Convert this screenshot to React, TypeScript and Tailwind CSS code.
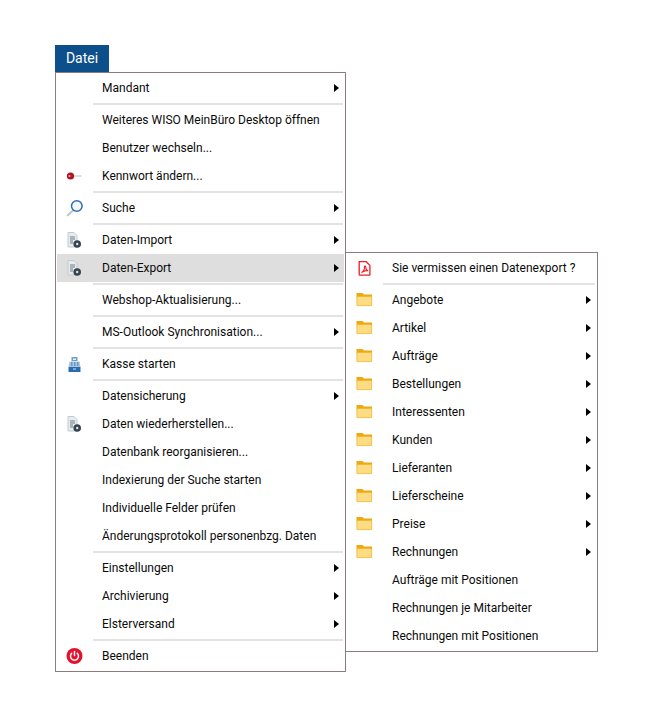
const fontStack = "font-['Roboto',sans-serif]";

type Row = { kind: "item"; label: string; arrow?: boolean; icon?: string; active?: boolean } | { kind: "sep" };

const item = (label: string, arrow = false, icon?: string, active = false): Row => ({ kind: "item", label, arrow, icon, active });
const sep: Row = { kind: "sep" };

const mainRows: Row[] = [
  item("Mandant", true),
  sep,
  item("Weiteres WISO MeinBüro Desktop öffnen"),
  item("Benutzer wechseln..."),
  item("Kennwort ändern...", false, "key"),
  sep,
  item("Suche", true, "search"),
  sep,
  item("Daten-Import", true, "doc"),
  item("Daten-Export", true, "doc", true),
  sep,
  item("Webshop-Aktualisierung..."),
  sep,
  item("MS-Outlook Synchronisation...", true),
  sep,
  item("Kasse starten", false, "till"),
  sep,
  item("Datensicherung", true),
  item("Daten wiederherstellen...", false, "doc"),
  item("Datenbank reorganisieren..."),
  item("Indexierung der Suche starten"),
  item("Individuelle Felder prüfen"),
  item("Änderungsprotokoll personenbzg. Daten"),
  sep,
  item("Einstellungen", true),
  item("Archivierung", true),
  item("Elsterversand", true),
  sep,
  item("Beenden", false, "power"),
];

const subRows: Row[] = [
  item("Sie vermissen einen Datenexport ?", false, "pdf"),
  sep,
  item("Angebote", true, "folder"),
  item("Artikel", true, "folder"),
  item("Aufträge", true, "folder"),
  item("Bestellungen", true, "folder"),
  item("Interessenten", true, "folder"),
  item("Kunden", true, "folder"),
  item("Lieferanten", true, "folder"),
  item("Lieferscheine", true, "folder"),
  item("Preise", true, "folder"),
  item("Rechnungen", true, "folder"),
  item("Aufträge mit Positionen"),
  item("Rechnungen je Mitarbeiter"),
  item("Rechnungen mit Positionen"),
];

function MenuIcon({ name }: { name?: string }) {
  if (name === "key")
    return (
      <svg width="18" height="18" viewBox="0 0 18 18">
        <path d="M8 9h7.500" stroke="#d8d4d4" strokeWidth="1.500" />
        <circle cx="4.500" cy="9" r="3.600" fill="#b3121f" />
        <circle cx="3.500" cy="9" r="1" fill="#f3c4c8" />
      </svg>
    );
  if (name === "search")
    return (
      <svg width="18" height="18" viewBox="0 0 18 18">
        <path d="M7 11.500 1.800 16.300" stroke="#b9cbc9" strokeWidth="2.200" strokeLinecap="round" />
        <circle cx="10.800" cy="7" r="5.300" fill="#f4f8fc" stroke="#2f6db0" strokeWidth="1.500" />
      </svg>
    );
  if (name === "doc")
    return (
      <svg width="18" height="18" viewBox="0 0 18 18">
        <path d="M2 1.500h6l3 3v11.500H2z" fill="#e8ebee" stroke="#c3cad0" strokeWidth="1" />
        <path d="M4 6h5M4 8h5M4 10h3M4 12h3" stroke="#6c7a87" strokeWidth="1" />
        <circle cx="11.200" cy="13" r="3.800" fill="#35444f" />
        <circle cx="11.200" cy="13" r="1.200" fill="#dfe4e8" />
      </svg>
    );
  if (name === "till")
    return (
      <svg width="18" height="18" viewBox="0 0 18 18">
        <path d="M5.500 2h6v4h-6z" fill="#6f9fd0" />
        <path d="M7 3.500h3v1.500H7z" fill="#e8f0f8" />
        <path d="M3.500 6.500h10l1 5.500h-12z" fill="#aac6de" />
        <path d="M5 8h1.500M8 8h1.500M11 8h1.500M5 10h1.500M8 10h1.500M11 10h1.500" stroke="#3e6a99" strokeWidth="1" />
        <path d="M2.500 12h12v5h-12z" fill="#2a6cb3" />
        <path d="M7 14h3" stroke="#cfe0f0" strokeWidth="1" />
      </svg>
    );
  if (name === "power")
    return (
      <svg width="18" height="18" viewBox="0 0 18 18">
        <circle cx="8.500" cy="9" r="8" fill="#e3122d" />
        <path d="M5.700 6.300a4 4 0 1 0 5.600 0" fill="none" stroke="#fff" strokeWidth="1.500" strokeLinecap="round" />
        <path d="M8.500 4.500v4" stroke="#fff" strokeWidth="1.500" strokeLinecap="round" />
      </svg>
    );
  if (name === "pdf")
    return (
      <svg width="18" height="18" viewBox="0 0 18 18">
        <path d="M3.200 2.700h7l3.700 3.700v9a.8.800 0 0 1-.8.800H4a.8.800 0 0 1-.8-.8z" fill="#fff" stroke="#ee1c25" strokeWidth="1.300" />
        <path d="M5.500 13.500c1.700-.8 3-3 3-5.500 0-1.200 1.200-1.200 1.200 0 0 1.800 1.200 3.300 2.300 3.700-1.800-.2-4.700.2-6.500 1.800z" fill="none" stroke="#ee1c25" strokeWidth="1.100" />
      </svg>
    );
  if (name === "folder")
    return (
      <svg width="18" height="18" viewBox="0 0 18 18">
        <path d="M.5 2h6l1.500 1.500h8v3H.5z" fill="#eda90f" />
        <path d="M.9 5.500h14.700v9.100H.9z" fill="#fddc84" stroke="#efb62f" strokeWidth="0.800" />
      </svg>
    );
  return null;
}

function MenuRows({ rows }: { rows: Row[] }) {
  return (
    <>
      {rows.map((row, i) =>
        row.kind === "sep" ? (
          <div key={i} className="h-1 flex items-center pr-[1px] pl-[36px]">
            <div className="h-[2px] w-full bg-[#e3e3e3]" />
          </div>
        ) : (
          <div key={i} className={`relative h-7 flex items-center ${row.active ? "bg-[#dedede]" : ""}`}>
            <div className="w-[34px] pl-[1px] flex justify-center shrink-0">
              <MenuIcon name={row.icon} />
            </div>
            <span className="ml-[11px] text-[12px] text-[#0a0a0a] whitespace-nowrap">{row.label}</span>
            {row.arrow && <span className="absolute right-[5px] top-[10px] w-0 h-0 border-y-[4px] border-y-transparent border-l-[5px] border-l-black" />}
          </div>
        )
      )}
    </>
  );
}

export default function App() {
  return (
    <div className={`min-h-[723px] bg-white pt-[45px] pl-[55px] ${fontStack}`}>
      <div className="w-[54px] h-[27px] bg-[#0c4f8b] text-white text-[14px] flex items-center justify-center">Datei</div>
      <div className="relative w-[291px] border border-[#8b7d7d] p-[1px]">
        <MenuRows rows={mainRows} />
        {/* flyout of Daten-Export */}
        <div className="absolute left-[289px] top-[179px] w-[253px] border border-[#8b7d7d] bg-white p-[1px]">
          <MenuRows rows={subRows} />
        </div>
      </div>
    </div>
  );
}
